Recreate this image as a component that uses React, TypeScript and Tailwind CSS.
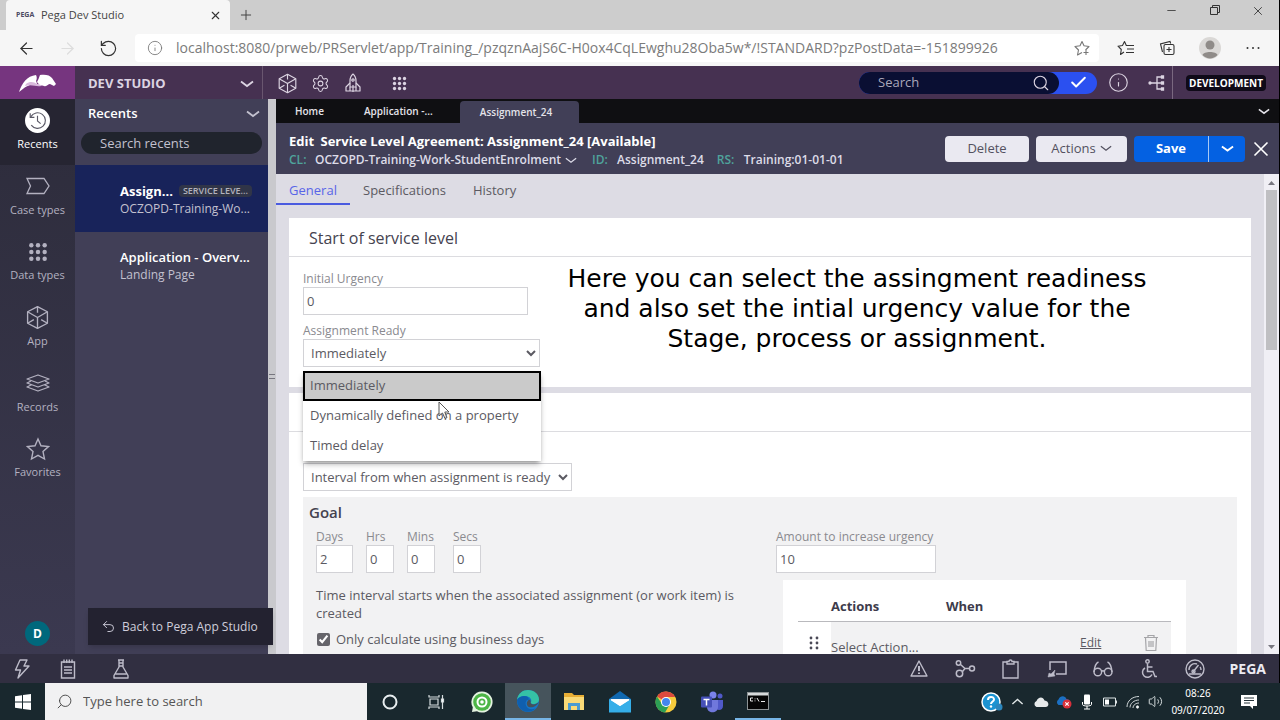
import type { ReactNode } from 'react';
import {
  ArrowLeft,
  ArrowRight,
  Check,
  Info,
  Minus,
  Plus,
  RotateCw,
  Search,
  Settings,
  Undo2,
  Volume2,
  X
} from 'lucide-react';

/* ---------- icons ---------- */

function Chevron({ width = 14, stroke = 1.8, up }: { width?: number; stroke?: number; up?: boolean }) {
  return (
    <svg width={width} height={width / 2 + 1} viewBox="0 0 14 8" fill="none" stroke="currentColor" strokeWidth={stroke} className="shrink-0">
      {up ? <path d="M1.5 6.5l5.5-5 5.5 5" /> : <path d="M1 1.5l6 4.5 6-4.5" />}
    </svg>
  );
}

function CubeIcon({ size = 22 }: { size?: number }) {
  return (
    <svg width={size} height={size} viewBox="0 0 24 24" fill="none" stroke="currentColor" strokeWidth="1.3" strokeLinejoin="round">
      <path d="M12 1.5 21.5 6.5v11L12 22.5 2.5 17.5v-11z" />
      <path d="M12 1.5v6M2.5 6.5 12 12l9.5-5.5M12 12v10.5M2.5 17.5l6-3.5M21.5 17.5l-6-3.5" />
    </svg>
  );
}

function RocketIcon() {
  return (
    <svg width="18" height="20" viewBox="0 0 18 20" fill="none" stroke="currentColor" strokeWidth="1.2" strokeLinejoin="round">
      <path d="M9 1c2.500 2 3 4.500 3 7v6H6V8c0-2.500.5-5 3-7z" />
      <path d="M6 10l-4 4v4h4M12 10l4 4v4h-4M6 14v4h6v-4M9 12v7" />
      <circle cx="9" cy="7" r="1.2" />
    </svg>
  );
}

function DotGrid({ size = 18 }: { size?: number }) {
  return (
    <svg width={size} height={size} viewBox="0 0 18 18" fill="currentColor">
      {[3, 9, 15].map(y => [3, 9, 15].map(x => <circle key={`${x}-${y}`} cx={x} cy={y} r="2" />))}
    </svg>
  );
}

function CaseIcon() {
  return (
    <svg width="26" height="20" viewBox="0 0 26 20" fill="none" stroke="currentColor" strokeWidth="1.3">
      <path d="M2 2.500h17l5 7.500-5 7.500H2L5.500 10z" />
    </svg>
  );
}

function LayersIcon() {
  return (
    <svg width="26" height="20" viewBox="0 0 26 20" fill="none" stroke="currentColor" strokeWidth="1.3" strokeLinejoin="round">
      <path d="M13 2l11 4-11 4L2 6z" />
      <path d="M6 8l-4 2 11 4 11-4-4-2M6 12l-4 2 11 4 11-4-4-2" />
    </svg>
  );
}

function StarIcon() {
  return (
    <svg width="24" height="24" viewBox="0 0 24 24" fill="none" stroke="currentColor" strokeWidth="1.4" strokeLinejoin="miter">
      <path d="M12 2l3 6.800 7.500.8-5.500 5 1.500 7.400-6.500-3.700L5.500 22 7 14.600l-5.500-5L9 8.800z" />
    </svg>
  );
}

function BoltIcon() {
  return (
    <svg width="16" height="20" viewBox="0 0 16 20" fill="none" stroke="currentColor" strokeWidth="1.4" strokeLinejoin="round">
      <path d="M6 1h7l-3 6h5L4 19l2.500-8H1.500z" />
    </svg>
  );
}

function ClockBadge() {
  return (
    <svg width="25" height="25" viewBox="0 0 24 24" fill="none">
      <circle cx="12" cy="12" r="12" fill="#fff" />
      <path d="M5.500 8.500a7.500 7.500 0 1 1 .5 8" stroke="#5a5966" strokeWidth="1.1" />
      <path d="M5 5v4h4M12 7.500V12.500l3 2.500" stroke="#5a5966" strokeWidth="1.1" />
    </svg>
  );
}

function PegasusLogo() {
  return (
    <svg width="40" height="20" viewBox="0 0 40 20">
      <path d="M1 19C4 10 9 3 18 2c1 2 1 4 0 6 1 2 1 3 1 4-6-2-11 1-18 7z" fill="#fff" />
      <path d="M8 11c4-3 8-2 11 0h6l-2 2c-5 1-9-2-16 0z" fill="#d9b9dc" />
      <path d="M22 2c5-1 10 0 12 3l4 6-2 2-4-2c-2 0-3 3-6 2-4-1-6-2-7-4 1-2 2-4 3-7z" fill="#fff" />
    </svg>
  );
}

function TreeIcon() {
  return (
    <svg width="18" height="18" viewBox="0 0 18 18" fill="none" stroke="currentColor" strokeWidth="1.3">
      <path d="M2 9h13M14 3H9v12h5" />
      <circle cx="2" cy="9" r="1" fill="currentColor" />
      <path d="M13.500 2h2v2h-2zM13.500 8h2v2h-2zM13.500 14h2v2h-2z" fill="currentColor" />
    </svg>
  );
}

function NotesIcon() {
  return (
    <svg width="16" height="20" viewBox="0 0 16 20" fill="none" stroke="currentColor" strokeWidth="1.4">
      <path d="M1.5 3h13v16h-13zM4 .5v3.500M6.700 .5v3.500M9.300 .5v3.500M12 .5v3.500M4 8h8M4 11h8M4 14h8" />
    </svg>
  );
}

function FlaskIcon() {
  return (
    <svg width="16" height="20" viewBox="0 0 16 20" fill="none" stroke="currentColor" strokeWidth="1.4" strokeLinejoin="round">
      <path d="M5 1h6M6 1v7L1 16.500V19h14v-2.500L10 8V1M6 4h4M6 7h4M2.500 15h11" />
    </svg>
  );
}

function AlertIcon() {
  return (
    <svg width="18" height="17" viewBox="0 0 18 17" fill="none" stroke="currentColor" strokeWidth="1.4" strokeLinejoin="round">
      <path d="M9 1l8 15H1z" />
      <path d="M9 6v5M9 12.500v1.500" strokeWidth="2" />
    </svg>
  );
}

function FlowIcon() {
  return (
    <svg width="22" height="20" viewBox="0 0 22 20" fill="none" stroke="currentColor" strokeWidth="1.5">
      <circle cx="4.500" cy="4" r="2.200" />
      <circle cx="5.500" cy="14.500" r="3.200" />
      <circle cx="18" cy="9.500" r="2.500" />
      <path d="M6.500 5.500l4.500 4h4.500M11 9.500L8.500 12.500" />
    </svg>
  );
}

function ClipboardIcon() {
  return (
    <svg width="17" height="20" viewBox="0 0 17 20" fill="none" stroke="currentColor" strokeWidth="1.4">
      <path d="M5 3H1v16h15V3h-4M5 5V2.500h2C7 .5 10 .5 10 2.500h2V5z" />
    </svg>
  );
}

function CastIcon() {
  return (
    <svg width="20" height="18" viewBox="0 0 20 18" fill="none" stroke="currentColor" strokeWidth="1.5">
      <path d="M3 10V2h16v12H9" />
      <path d="M1 17l1-4 2 1 4-4-1 4 1 2z" fill="currentColor" strokeWidth="0.5" />
    </svg>
  );
}

function GlassesIcon() {
  return (
    <svg width="20" height="16" viewBox="0 0 20 16" fill="none" stroke="currentColor" strokeWidth="1.4">
      <circle cx="4.800" cy="11" r="3.800" />
      <circle cx="15.200" cy="11" r="3.800" />
      <path d="M8.500 10.500c1-1 2-1 3 0M1 11C1.500 6 3 2 5.500 1M19 11c-.5-5-2-9-4.500-10" />
    </svg>
  );
}

function WheelchairIcon() {
  return (
    <svg width="18" height="20" viewBox="0 0 18 20" fill="none" stroke="currentColor" strokeWidth="1.5">
      <circle cx="7.500" cy="2.500" r="1.700" />
      <path d="M7.500 5v7.500H13l2 5h2M7.500 8h5" />
      <path d="M5 9a5 5 0 1 0 7 6.500" />
    </svg>
  );
}

function SpeedIcon() {
  return (
    <svg width="20" height="20" viewBox="0 0 20 20" fill="none" stroke="currentColor" strokeWidth="1.4">
      <circle cx="10" cy="10" r="9" />
      <path d="M4 15h12M4 11a6 6 0 0 1 8-6M15 8c1 1 1 2 1 3M13.500 6L8 13" />
      <circle cx="8.500" cy="12.500" r="1.500" />
    </svg>
  );
}

function TrashIcon() {
  return (
    <svg width="16" height="18" viewBox="0 0 16 18" fill="none" stroke="currentColor" strokeWidth="1.2">
      <path d="M1 3.500h14M5 3.500V1.500h6v2M2.500 3.500l.7 13h9.600l.7-13M6 7v6M8 7v6M10 7v6" />
    </svg>
  );
}

function FavouritesIcon({ plus }: { plus?: boolean }) {
  return (
    <svg width="18" height="16" viewBox="0 0 18 16" fill="none" stroke="currentColor" strokeWidth="1.1" strokeLinejoin="round">
      {plus ? (
        <path d="M9 12.500L4.500 15l1-5L2 6.500l5-.7L9 1.500l2 4.300 5 .7-3.500 3.500M10.500 12.500h5M13 10v5" />
      ) : (
        <path d="M7 12l-3.500 2.500.8-5L1 6.200l4.500-.7L7.500 1.500l1.800 4H17M10 9h7M9 12.500h8" />
      )}
    </svg>
  );
}

function CollectionsIcon() {
  return (
    <svg width="16" height="16" viewBox="0 0 16 16" fill="none" stroke="currentColor" strokeWidth="1.1">
      <rect x="5" y="4.500" width="10" height="10" rx="1.500" />
      <path d="M10 7v5M7.500 9.500h5M3.500 12L1.500 4 11 1.500l.7 2" />
    </svg>
  );
}

function ProfileIcon() {
  return (
    <svg width="22" height="22" viewBox="0 0 22 22">
      <circle cx="11" cy="11" r="11" fill="#dad8d6" />
      <circle cx="11" cy="8" r="4.500" fill="#8f8b88" />
      <path d="M3.500 18c1-4 14-4 15 0-4 4.500-11 4.500-15 0z" fill="#8f8b88" />
    </svg>
  );
}

const taskIcons: { name: string; state?: 'active' | 'open'; icon: ReactNode }[] = [
  {
    name: 'Cortana',
    icon: (
      <svg width="16" height="16" viewBox="0 0 16 16">
        <circle cx="8" cy="8" r="6.500" fill="none" stroke="#e8eef0" strokeWidth="2" />
      </svg>
    )
  },
  {
    name: 'Task view',
    icon: (
      <svg width="17" height="16" viewBox="0 0 17 16" fill="none" stroke="#d5dcde" strokeWidth="1.2">
        <path d="M1 1v2h10V1M1 15v-2h10v2M2 5h8v6H2zM14.500 1v14" />
        <path d="M13.500 5h2v3h-2z" fill="#fff" />
      </svg>
    )
  },
  {
    name: 'Recorder',
    icon: (
      <svg width="22" height="22" viewBox="0 0 22 22">
        <path d="M11 0.500a10.500 10.500 0 1 1-5 19.700L1 21l.8-4.800A10.500 10.500 0 0 1 11 .5z" fill="#e4f3e0" />
        <circle cx="11" cy="11" r="8.800" fill="#4db546" />
        <circle cx="11" cy="11" r="4.500" fill="none" stroke="#fff" strokeWidth="2" />
        <circle cx="11" cy="11" r="1.800" fill="#fff" />
      </svg>
    )
  },
  {
    name: 'Edge',
    state: 'active',
    icon: (
      <svg width="24" height="24" viewBox="0 0 24 24">
        <circle cx="12" cy="12" r="11" fill="#1576c8" />
        <path d="M1 11C2 4 7 1 12 1c6 0 11 4 11 9.500 0 3-3 4.500-5.500 4.500-3 0-3-1.500-2.300-2.500C16 9 12 6.500 8 7c-3 .4-5.500 2-7 4z" fill="#35c1a6" />
        <path d="M1 11c2-4.500 11-6 12-.5-3 0-4 3-3 6 1 3 5 5 9.500 3C16 23 10 24 6 21c-3-2-5-6-5-10z" fill="#0f5fae" />
        <path d="M13.500 10.500c2 1 .5 3 1.500 4 2 2 6 .5 7.500-1.500-1 4-6 6-9.500 5-3-1-3-6 .5-7.500z" fill="#46515a" />
      </svg>
    )
  },
  {
    name: 'File Explorer',
    icon: (
      <svg width="22" height="19" viewBox="0 0 22 19">
        <path d="M1 1h8l2 2h10v15H1z" fill="#e7ae35" />
        <path d="M1 5h20v13H1z" fill="#f9da77" />
        <path d="M5 18v-7h12v7h-3v-4H8v4z" fill="#4a9bd1" />
      </svg>
    )
  },
  {
    name: 'Mail',
    icon: (
      <svg width="24" height="22" viewBox="0 0 24 22">
        <path d="M1 8L12 0l11 8v13H1z" fill="#1068b0" />
        <path d="M3 8h18v9H3z" fill="#f1f5f8" />
        <path d="M1 8l11 7 11-7v13.500H1z" fill="#35aee8" />
        <path d="M2 8.500h20l-10 6.500z" fill="#fff" />
      </svg>
    )
  },
  {
    name: 'Chrome',
    icon: (
      <svg width="22" height="22" viewBox="0 0 22 22">
        <circle cx="11" cy="11" r="10.500" fill="#f6cb3c" />
        <path d="M11 11L2 5.500A10.500 10.500 0 0 1 20.300 6H11z" fill="#dc4a3d" />
        <path d="M2 5.500A10.500 10.500 0 0 0 10 21.500l5-8.500-4-2-4 2z" fill="#2c9f55" />
        <circle cx="11" cy="11" r="5" fill="#fff" />
        <circle cx="11" cy="11" r="4" fill="#4486ec" />
      </svg>
    )
  },
  {
    name: 'Teams',
    icon: (
      <svg width="24" height="22" viewBox="0 0 24 22">
        <circle cx="13" cy="4" r="3.500" fill="#7b83eb" />
        <circle cx="20" cy="5" r="2.500" fill="#5059c9" />
        <path d="M16 9h7v6c0 4-4 5-7 3z" fill="#5059c9" />
        <path d="M7 9h11v7c0 7-11 7-11 0z" fill="#7078dc" />
        <rect x="1" y="5.500" width="11" height="11" rx="1" fill="#4650b8" />
        <path d="M3.500 8.500h6M6.500 8.500v6" stroke="#fff" strokeWidth="1.500" />
      </svg>
    )
  },
  {
    name: 'Command Prompt',
    state: 'open',
    icon: (
      <svg width="22" height="18" viewBox="0 0 22 18">
        <rect x="0.500" y="0.500" width="21" height="17" fill="#050505" stroke="#8d9395" />
        <path d="M1 1h20v2.500H1z" fill="#d7dadb" />
        <path d="M6 6H3.500v3H6M8 6.500v.8M8 8.500v.8M10 6l2 3.500M14 9.500h4" stroke="#e8e8e8" fill="none" />
      </svg>
    )
  }
];

const trayIcons: { name: string; icon: ReactNode }[] = [
  { name: 'Show hidden icons', icon: <Chevron width={13} stroke={1.5} up /> },
  {
    name: 'OneDrive',
    icon: (
      <svg width="16" height="12" viewBox="0 0 16 12">
        <path d="M3.500 11a3.200 3.200 0 0 1 0-6C5 1 10 0 11.500 4.500c5 .5 5 6.500 1 6.500z" fill="#e6e9ea" />
      </svg>
    )
  },
  {
    name: 'OneDrive sync error',
    icon: (
      <svg width="17" height="14" viewBox="0 0 17 14">
        <path d="M3.500 10a3.200 3.200 0 0 1 0-5.500C5 .5 10 0 11.500 4c5 .5 5 6 1 6z" fill="#1b6fc2" />
        <circle cx="12" cy="9" r="4.500" fill="#d9303b" />
        <path d="M10.300 7.300l3.400 3.400M13.700 7.300l-3.400 3.400" stroke="#fff" strokeWidth="1.2" />
      </svg>
    )
  },
  {
    name: 'Microphone',
    icon: (
      <svg width="12" height="16" viewBox="0 0 12 16">
        <rect x="3" y="0.500" width="6" height="10" rx="1" fill="#fff" />
        <path d="M1.500 8v2.500c0 2 9 2 9 0V8M6 12v3M3 15h6" stroke="#fff" fill="none" />
      </svg>
    )
  },
  {
    name: 'Battery',
    icon: (
      <svg width="16" height="12" viewBox="0 0 16 12" fill="none" stroke="#dfe5e6">
        <path d="M1.500 2h12v8h-12zM14.500 4.500v3" />
        <path d="M3 3.500h4v5H3z" fill="#fff" stroke="none" />
      </svg>
    )
  },
  {
    name: 'Wi-Fi',
    icon: (
      <svg width="14" height="14" viewBox="0 0 14 14" fill="none" stroke="#cfd6d8">
        <path d="M1 12C1 6 6 1.500 13 1.500M4 12.500c0-4 4-7.500 9-7.500M7 13c0-3 3-5 6-5" />
        <circle cx="11.500" cy="12" r="1.200" fill="#fff" />
      </svg>
    )
  },
  { name: 'Volume', icon: <Volume2 size={15} strokeWidth={1.5} /> }
];

const navItems = [
  { label: 'Recents', icon: <ClockBadge />, active: true },
  { label: 'Case types', icon: <CaseIcon /> },
  { label: 'Data types', icon: <DotGrid size={20} /> },
  { label: 'App', icon: <CubeIcon size={25} /> },
  { label: 'Records', icon: <LayersIcon /> },
  { label: 'Favorites', icon: <StarIcon /> }
];

const footerTools = [
  { label: 'Alerts', icon: <AlertIcon /> },
  { label: 'Flow', icon: <FlowIcon /> },
  { label: 'Clipboard', icon: <ClipboardIcon /> },
  { label: 'Tracer', icon: <CastIcon /> },
  { label: 'Live UI', icon: <GlassesIcon /> },
  { label: 'Accessibility', icon: <WheelchairIcon /> },
  { label: 'Performance', icon: <SpeedIcon /> }
];

const durations = [
  { id: 'days', label: 'Days', value: '2', box: 'w-[37px]', cell: 'w-[50px]' },
  { id: 'hrs', label: 'Hrs', value: '0', box: 'w-7', cell: 'w-[41px]' },
  { id: 'mins', label: 'Mins', value: '0', box: 'w-7', cell: 'w-[46px]' },
  { id: 'secs', label: 'Secs', value: '0', box: 'w-7', cell: 'w-[41px]' }
];

const readyOptions = ['Immediately', 'Dynamically defined on a property', 'Timed delay'];

/* ---------- browser ---------- */

function BrowserChrome() {
  return (
    <header className="shrink-0">
      <div className="flex h-[30px] items-stretch bg-[#cdcdcd] pl-[6px]">
        <div className="flex w-56 items-center rounded-t bg-[#f6f6f6] pr-2 pl-[10px]">
          <span className="w-[25px] text-[7px] font-bold text-[#4c4b63]">PEGA</span>
          <span className="flex-1 text-[11px] text-[#444]">Pega Dev Studio</span>
          <button aria-label="Close tab"><X size={13} strokeWidth={2} className="text-[#333]" /></button>
        </div>
        <button aria-label="New tab" className="px-2 text-[#444]"><Plus size={16} strokeWidth={1.5} /></button>
        <div className="ml-auto flex items-start pt-1 text-[#333]">
          <button aria-label="Minimize" className="flex w-[43px] justify-center"><Minus size={13} strokeWidth={1.5} /></button>
          <button aria-label="Restore" className="flex w-[43px] justify-center">
            <svg width="12" height="12" viewBox="0 0 12 12" fill="none" stroke="currentColor">
              <path d="M1.500 3.500h7v7h-7zM3.500 3.500v-2h7v7h-2" />
            </svg>
          </button>
          <button aria-label="Close" className="flex w-[43px] justify-center"><X size={14} strokeWidth={1.5} /></button>
        </div>
      </div>
      <div className="flex h-9 items-center bg-[#f6f6f6] text-[#333]">
        <button aria-label="Back" className="ml-[17px]"><ArrowLeft size={19} strokeWidth={1.5} /></button>
        <button aria-label="Forward" className="ml-[22px] text-[#ddd]"><ArrowRight size={19} strokeWidth={1.5} /></button>
        <button aria-label="Refresh" className="ml-[22px]"><RotateCw size={19} strokeWidth={1.5} className="-scale-x-100" /></button>
        <div className="ml-[17px] flex h-7 flex-1 items-center rounded bg-white pr-2 pl-[12px] text-[#777]">
          <Info size={16} strokeWidth={1.3} />
          <input
            aria-label="Address"
            className="ml-[13px] min-w-0 flex-1 text-sm text-[#7b7b7b] outline-none"
            defaultValue="localhost:8080/prweb/PRServlet/app/Training_/pzqznAajS6C-H0ox4CqLEwghu28Oba5w*/!STANDARD?pzPostData=-151899926"
          />
          <button aria-label="Add to favourites"><FavouritesIcon plus /></button>
        </div>
        <div className="flex w-[180px] items-center pl-[18px]">
          <button aria-label="Favourites" className="w-[42px]"><FavouritesIcon /></button>
          <button aria-label="Collections" className="w-[40px]"><CollectionsIcon /></button>
          <button aria-label="Profile" className="w-[47px]"><ProfileIcon /></button>
          <button aria-label="More">
            <svg width="14" height="4" viewBox="0 0 14 4" fill="currentColor">
              <circle cx="1.500" cy="2" r="1" /><circle cx="7" cy="2" r="1" /><circle cx="12.500" cy="2" r="1" />
            </svg>
          </button>
        </div>
      </div>
    </header>
  );
}

/* ---------- studio ---------- */

function StudioHeader() {
  return (
    <div className="flex h-[33px] shrink-0 items-center bg-[#463151] text-[#dcd4e2]">
      <a href="#home" aria-label="Pega" className="flex h-full w-[75px] items-center justify-center bg-[#76357f]"><PegasusLogo /></a>
      <button className="flex h-full w-[188px] items-center justify-between border-r border-[#69566f] pt-[2px] pr-2 pl-[13px] text-[13px] font-bold">
        DEV STUDIO
        <Chevron />
      </button>
      <div className="flex items-center pt-px pl-[14px]">
        <button aria-label="Application" className="w-[34px]"><CubeIcon size={21} /></button>
        <button aria-label="Configure" className="w-[33px]"><Settings size={19} strokeWidth={1.3} /></button>
        <button aria-label="Launch" className="w-[48px]"><RocketIcon /></button>
        <button aria-label="Apps"><DotGrid size={15} /></button>
      </div>
      <div className="ml-auto flex h-[22px] w-[238px] rounded-full bg-[#2b50f0]">
        <div className="flex w-[200px] items-center rounded-full bg-[#0a0f33] pr-[9px] pl-[19px]">
          <input aria-label="Search" placeholder="Search" className="min-w-0 flex-1 text-[13px] outline-none placeholder:text-[#a9a8bb]" />
          <Search size={18} strokeWidth={1.5} />
        </div>
        <button aria-label="Apply search" className="flex flex-1 items-center justify-center text-white"><Check size={19} strokeWidth={2.5} /></button>
      </div>
      <button aria-label="Help" className="ml-[11px]"><Info size={21} strokeWidth={1.3} /></button>
      <div className="ml-[19px] flex h-full items-center border-r border-[#7a6880] pr-[6px]"><TreeIcon /></div>
      <span className="mr-[13px] ml-[13px] w-20 rounded-sm bg-[#0f0a18] text-center text-[10px] leading-4 font-bold text-white">DEVELOPMENT</span>
    </div>
  );
}

function NavRail() {
  return (
    <nav className="flex w-[75px] shrink-0 flex-col bg-linear-to-b from-[#2d2c3b] to-[#3b3950]">
      <div className="flex h-[394px] flex-col">
        {navItems.map(item => (
          <button
            key={item.label}
            className={`flex flex-1 flex-col items-center pt-[7px] text-[11px] leading-[18px] ${
              item.active ? 'bg-[#262532] text-white' : 'text-[#b3b1c0]'
            }`}
          >
            <span className="flex h-[29px] items-center">{item.icon}</span>
            {item.label}
          </button>
        ))}
      </div>
      <button aria-label="Operator menu" className="mt-auto mb-2 size-[25px] self-center rounded-full bg-[#00687c] text-xs font-bold text-white">D</button>
    </nav>
  );
}

function RecentsPanel() {
  return (
    <aside className="flex w-[193px] shrink-0 flex-col bg-[#413f57] text-[#c3c1cf]">
      <div className="flex h-[30px] items-center justify-between pr-2 pl-[13px]">
        <h2 className="text-[13px] font-semibold text-white">Recents</h2>
        <Chevron />
      </div>
      <input
        aria-label="Search recents"
        placeholder="Search recents"
        className="mx-[6px] mt-[3px] mb-[11px] h-[22px] rounded-full bg-[#20242d] px-[19px] text-[13px] outline-none placeholder:text-[#c3c1cf]"
      />
      <a href="#assignment" className="flex h-[67px] flex-col justify-center bg-[#18235a] pt-[3px] pr-3 pl-[45px]">
        <span className="flex items-center gap-[6px]">
          <span className="text-[13px] leading-[18px] font-bold text-white">Assign...</span>
          <span className="rounded-sm bg-[#303548] px-1 text-[9px] leading-3 font-semibold text-[#b3b3be]">SERVICE LEVE...</span>
        </span>
        <span className="text-xs leading-[18px]">OCZOPD-Training-Wo...</span>
      </a>
      <a href="#application" className="flex h-[66px] flex-col justify-center pt-[2px] pl-[45px]">
        <span className="text-[13px] leading-[18px] font-semibold text-white">Application - Overv...</span>
        <span className="text-xs leading-[18px]">Landing Page</span>
      </a>
    </aside>
  );
}

function RuleHeader() {
  return (
    <>
      <div className="flex h-6 items-end bg-[#0f0f12] text-[10px] font-semibold text-[#e4e3ea]">
        <button className="h-6 w-[88px] pl-[19px] text-left">Home</button>
        <button className="h-6 w-24 text-left">Application -...</button>
        <button className="h-[22px] w-[119px] rounded-t bg-[#413f57] pr-[7px]">Assignment_24</button>
        <button aria-label="More tabs" className="mr-[9px] ml-auto self-center"><Chevron width={12} /></button>
      </div>
      <div className="flex h-[51px] items-center bg-[#413f57] pl-[13px] font-bold text-white">
        <div className="pt-[3px]">
          <h1 className="text-[13px] leading-5">
            Edit <span className="ml-[3px]">Service Level Agreement: Assignment_24 [Available]</span>
          </h1>
          <div className="flex items-center text-xs leading-[18px] font-semibold text-[#dddce8]">
            <span className="w-[26px] text-[#4fa39c]">CL:</span>
            OCZOPD-Training-Work-StudentEnrolment
            <span className="mr-[15px] ml-[4px]"><Chevron width={12} stroke={1.5} /></span>
            <span className="w-[25px] text-[#4fa39c]">ID:</span>
            Assignment_24
            <span className="ml-[13px] w-[27px] text-[#4fa39c]">RS:</span>
            Training:01-01-01
          </div>
        </div>
        <div className="ml-auto flex items-center gap-[7px] pr-[9px] text-[13px]">
          <button className="h-[26px] w-[84px] rounded-sm bg-[#eae9f1] font-normal text-[#53515f]">Delete</button>
          <button className="flex h-[26px] w-[91px] items-center justify-center gap-1 rounded-sm bg-[#eae9f1] font-normal text-[#53515f]">
            Actions <Chevron width={12} stroke={1.5} />
          </button>
          <div className="flex h-[26px] w-[111px] rounded-sm bg-[#0461e2]">
            <button className="w-[75px] border-r border-[#a9c9f5]">Save</button>
            <button aria-label="Save options" className="flex flex-1 items-center justify-center"><Chevron width={13} stroke={2} /></button>
          </div>
          <button aria-label="Close rule">
            <svg width="18" height="18" viewBox="0 0 18 18" fill="none" stroke="currentColor" strokeWidth="1.6"><path d="M2.500 2.500l13 13M15.500 2.500l-13 13" /></svg>
          </button>
        </div>
      </div>
    </>
  );
}

function ReadyMenu() {
  return (
    <div className="relative w-[237px]">
      <select id="ready" className="h-7 w-full border border-[#d2d2d6] bg-white px-[3px]">
        {readyOptions.map(option => <option key={option}>{option}</option>)}
      </select>
      <div role="listbox" aria-label="Assignment Ready" className="absolute top-8 left-0 z-20 flex w-[238px] flex-col bg-white shadow-md shadow-black/30">
        {readyOptions.map((option, i) => (
          <button
            key={option}
            role="option"
            aria-selected={i === 0}
            className={`h-[30px] px-[7px] text-left ${i === 0 ? 'bg-[#cacaca] outline-2 -outline-offset-2 outline-black' : ''}`}
          >
            {option}
          </button>
        ))}
        {/* mouse pointer */}
        <svg width="13" height="19" viewBox="0 0 13 19" className="absolute top-[30px] left-[135px]">
          <path d="M1 1v14l3.500-3 2.500 5.500 2-1L6.800 11H11z" fill="#ffffffaa" stroke="#555" />
        </svg>
      </div>
    </div>
  );
}

function GoalPanel() {
  return (
    <div className="mx-[14px] mt-[6px] flex flex-1 bg-[#f2f2f3] pb-4">
      <div className="w-1/2 pt-[5px] pr-2 pl-[6px]">
        <h3 className="text-[15px] leading-5 font-semibold text-[#45434f]">Goal</h3>
        <div className="mt-[7px] ml-[7px] flex">
          {durations.map(d => (
            <div key={d.id} className={d.cell}>
              <label htmlFor={d.id} className="block text-xs leading-4 text-[#8a8a8f]">{d.label}</label>
              <input id={d.id} defaultValue={d.value} className={`h-7 border border-[#d2d2d6] bg-white px-[3px] ${d.box}`} />
            </div>
          ))}
        </div>
        <p className="mt-[13px] ml-[7px] w-[430px] leading-[18px]">
          Time interval starts when the associated assignment (or work item) is created
        </p>
        <label className="mt-2 ml-[8px] flex items-center gap-[6px] leading-[18px]">
          <input type="checkbox" defaultChecked className="size-[13px] accent-[#66656b]" />
          Only calculate using business days
        </label>
      </div>
      <div className="flex-1 pt-8 pr-[51px] pl-[6px]">
        <label htmlFor="amount" className="block text-xs leading-4 text-[#8a8a8f]">Amount to increase urgency</label>
        <input id="amount" defaultValue="10" className="block h-7 w-40 border border-[#d2d2d6] bg-white px-[3px]" />
        <div className="mt-[7px] ml-[7px] bg-white px-[15px] pt-[13px] pb-8">
          <table className="w-full text-left">
            <thead className="text-[#3d3b4b]">
              <tr className="h-7 border-b border-[#b9b9bd]">
                <th className="w-[33px]" />
                <th className="w-[115px] font-bold">Actions</th>
                <th className="font-bold">When</th>
                <th className="w-[60px]" />
                <th className="w-[31px]" />
              </tr>
            </thead>
            <tbody>
              <tr className="h-[43px]">
                <td className="pl-[11px]">
                  <svg width="10" height="14" viewBox="0 0 10 14" fill="#4a4956">
                    {[2, 7, 12].map(y => [2, 8].map(x => <circle key={`${x}-${y}`} cx={x} cy={y} r="1.400" />))}
                  </svg>
                </td>
                <td className="bg-[#f2f2f3] pt-[10px]">Select Action...</td>
                <td className="bg-[#f2f2f3]" />
                <td className="bg-[#f2f2f3]"><a href="#edit" className="text-xs underline">Edit</a></td>
                <td className="bg-[#f2f2f3] pl-[3px] text-[#a5a5a8]"><button aria-label="Delete action" className="block"><TrashIcon /></button></td>
              </tr>
            </tbody>
          </table>
        </div>
      </div>
    </div>
  );
}

function RuleForm() {
  return (
    <div className="flex min-h-0 flex-1 bg-[#dddce4] text-[13px] text-[#5b5a62]">
      <div className="relative flex min-w-0 flex-1 flex-col overflow-hidden">
        <div className="flex h-[31px] shrink-0">
          <button className="w-[74px] border-b-2 border-[#4a5be0] pt-1 text-[#5865e8]">General</button>
          <button className="ml-[13px] pt-[2px]">Specifications</button>
          <button className="ml-[27px] pt-[2px]">History</button>
        </div>
        <section className="mx-[13px] mt-[13px] shrink-0 bg-white">
          <h2 className="h-[39px] border-b border-[#dcdce0] pl-5 text-base leading-10 text-[#45434f]">Start of service level</h2>
          <div className="px-[14px] pt-[14px] pb-5">
            <label htmlFor="urgency" className="block text-xs leading-4 text-[#8a8a8f]">Initial Urgency</label>
            <input id="urgency" defaultValue="0" className="block h-7 w-[225px] border border-[#d2d2d6] px-[3px]" />
            <label htmlFor="ready" className="mt-2 block text-xs leading-4 text-[#8a8a8f]">Assignment Ready</label>
            <ReadyMenu />
          </div>
        </section>
        <section className="mx-[13px] mt-[6px] flex flex-1 flex-col bg-white">
          <div className="h-[39px] shrink-0 border-b border-[#dcdce0]" />
          <select aria-label="Interval" className="mt-[31px] ml-[14px] h-7 w-[269px] shrink-0 border border-[#d2d2d6] bg-white px-[3px]">
            <option>Interval from when assignment is ready</option>
          </select>
          <GoalPanel />
        </section>
        <p className="absolute top-[90px] right-[107px] w-[600px] text-center font-['DejaVu_Sans',sans-serif] text-[25px] leading-[30px] text-black">
          Here you can select the assingment readiness and also set the intial urgency value for the Stage, process or assignment.
        </p>
      </div>
      <div className="flex w-[15px] flex-col items-center justify-between bg-[#f0eff5] py-1 text-[#77767f]">
        <svg width="7" height="8" viewBox="0 0 7 8" fill="currentColor"><path d="M0 7h7L3.500 3z" /></svg>
        <div className="mt-1 mb-auto h-[160px] w-[11px] bg-[#bfbfc2]" />
        <svg width="7" height="8" viewBox="0 0 7 8" fill="currentColor"><path d="M0 3h7L3.500 7z" /></svg>
      </div>
    </div>
  );
}

function StudioFooter() {
  return (
    <footer className="flex h-[29px] shrink-0 items-center bg-[#312f41] text-[#bdbcc9]">
      <button aria-label="Quick actions" className="ml-[14px] w-[46px]"><BoltIcon /></button>
      <button aria-label="Notes" className="w-[53px]"><NotesIcon /></button>
      <button aria-label="Tests"><FlaskIcon /></button>
      <div className="ml-auto flex">
        {footerTools.map(tool => (
          <button key={tool.label} aria-label={tool.label} className="flex w-[46px] items-center justify-center">{tool.icon}</button>
        ))}
      </div>
      <span className="mr-[13px] ml-3 text-sm font-bold text-[#ecebf2]">PEGA</span>
    </footer>
  );
}

/* ---------- desktop ---------- */

function Taskbar() {
  return (
    <div className="flex h-[37px] shrink-0 items-stretch bg-[#19282e] text-[#dfe5e6]">
      <button aria-label="Start" className="flex w-[45px] items-center justify-center">
        <svg width="16" height="16" viewBox="0 0 16 16" fill="#fff">
          <path d="M0 2.200L7 1.200v6.400H0zM8 1l8-1v7.600H8zM0 8.500h7v6.300L0 13.800zM8 8.500h8V16l-8-1z" />
        </svg>
      </button>
      <div className="flex w-[322px] items-center bg-[#f1f1f2] pl-[11px] text-[#444]">
        <Search size={17} strokeWidth={1.3} className="-scale-x-100" />
        <input
          aria-label="Type here to search"
          placeholder="Type here to search"
          className="ml-[10px] flex-1 text-[13px] outline-none placeholder:text-[#555]"
        />
      </div>
      {taskIcons.map(task => (
        <button
          key={task.name}
          aria-label={task.name}
          className={`flex w-[46px] items-center justify-center ${task.state === 'active' ? 'border-b-2 border-[#77b5e6] bg-[#46545c]' : ''} ${
            task.state === 'open' ? 'border-b-2 border-[#77b5e6]' : ''
          }`}
        >
          {task.icon}
        </button>
      ))}
      <div className="ml-auto flex items-center">
        <button aria-label="Get help" className="mr-[3px]">
          <svg width="22" height="20" viewBox="0 0 22 20">
            <circle cx="10" cy="10" r="9" fill="#1b93d2" stroke="#fff" strokeWidth="1.5" />
            <path d="M7 8c0-4 6-4 6-.5 0 2-3 2-3 4.500" fill="none" stroke="#fff" strokeWidth="2" />
            <circle cx="10" cy="14.500" r="1.200" fill="#fff" />
            <circle cx="18" cy="15" r="3.500" fill="#2b86bd" />
          </svg>
        </button>
        {trayIcons.map(tray => (
          <button key={tray.name} aria-label={tray.name} className="flex w-[23px] justify-center">{tray.icon}</button>
        ))}
        <div className="w-[62px] text-center font-['Noto_Sans',sans-serif] text-[10px] leading-[17px] text-white">
          08:26<br />09/07/2020
        </div>
        <button aria-label="Notifications" className="mr-[23px] ml-3">
          <svg width="16" height="16" viewBox="0 0 16 16">
            <path d="M0 1h16v11h-4v3l-3-3H0z" fill="#fff" />
            <path d="M3 4h10M3 6.500h10M3 9h6" stroke="#26343a" />
          </svg>
        </button>
      </div>
    </div>
  );
}

export default function App() {
  return (
    <div className="flex h-screen flex-col overflow-hidden font-['Open_Sans',sans-serif]">
      <div className="flex min-h-0 flex-1 flex-col border-r border-black bg-[#dddce4]">
        <BrowserChrome />
        <StudioHeader />
        <div className="relative flex min-h-0 flex-1">
          <NavRail />
          <RecentsPanel />
          <div className="flex w-2 shrink-0 items-center justify-center bg-[#c9c9cd] text-[#77767f]">
            <svg width="6" height="5" viewBox="0 0 6 5" stroke="currentColor"><path d="M0 .5h6M0 4.500h6" /></svg>
          </div>
          <main className="flex min-w-0 flex-1 flex-col">
            <RuleHeader />
            <RuleForm />
          </main>
          <button className="absolute bottom-[9px] left-[88px] z-10 flex h-[37px] w-[185px] items-center gap-[6px] bg-[#232230] pl-[13px] text-xs text-[#cfcedb] shadow-md">
            <Undo2 size={15} strokeWidth={1.5} />
            Back to Pega App Studio
          </button>
        </div>
        <StudioFooter />
      </div>
      <Taskbar />
    </div>
  );
}
